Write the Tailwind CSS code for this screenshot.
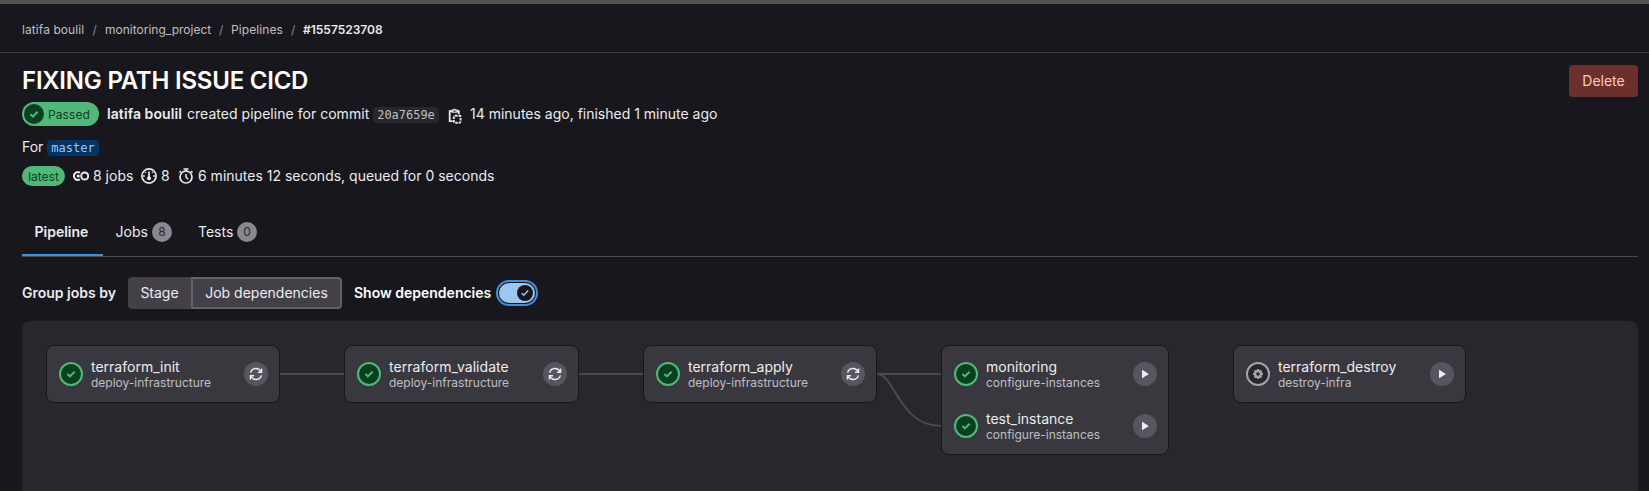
<!DOCTYPE html>
<html lang="en">
<head>
<meta charset="utf-8">
<title>Pipeline #1557523708</title>
<script src="https://cdn.jsdelivr.net/npm/@tailwindcss/browser@4"></script>
</head>
<body class="bg-[#18171d] font-['Inter',sans-serif] text-sm leading-5 text-[#ececef]">
<svg class="hidden">
  <symbol id="ok" viewBox="0 0 24 24"><circle cx="12" cy="12" r="11" fill="#0a4020" stroke="#52b87a" stroke-width="2"/><path d="M8.400 12l2.500 2.400 4.700-4.700" fill="none" stroke="#52b87a" stroke-width="2"/></symbol>
  <symbol id="retry" viewBox="0 0 24 24"><circle cx="12" cy="12" r="12" fill="#57555d"/><g fill="none" stroke="#ececef" stroke-width="1.400"><path d="M6.600 10.600A5.600 5.600 0 0 1 17.100 9.700"/><path d="M17.400 13.400A5.600 5.600 0 0 1 6.900 14.300"/><path d="M17.600 6.600v3.600h-3.600M6.400 17.400v-3.600h3.600"/></g></symbol>
  <symbol id="play" viewBox="0 0 24 24"><path d="M9 8.300v7.400a.4.4 0 0 0 .6.300l5.800-3.700a.4.4 0 0 0 0-.6L9.600 8a.4.4 0 0 0-.6.300z" fill="#ececef"/></symbol>
  <symbol id="manual" viewBox="0 0 24 24"><circle cx="12" cy="12" r="11" fill="#28272d" stroke="#a4a3a8" stroke-width="2"/><circle cx="12" cy="12" r="3" fill="none" stroke="#a4a3a8" stroke-width="2.400"/><path d="M12 7v2M12 15v2M7 12h2M15 12h2M8.500 8.500l1.300 1.300M14.200 14.200l1.300 1.300M8.500 15.500l1.300-1.300M14.200 9.800l1.300-1.300" stroke="#a4a3a8" stroke-width="2"/></symbol>
</svg>
<div class="flex h-[491px] flex-col overflow-hidden whitespace-nowrap">
  <div class="h-1 shrink-0 bg-[#535353]"></div>
  <nav class="flex h-[49px] shrink-0 items-center border-b border-[#3a383f] pl-[22px] pt-[3px] text-xs text-[#bfbfc3]">
    <span class="w-[70.500px] tracking-[0.08px]">latifa boulil</span><span class="w-[12.500px] text-[#89888d]">/</span>
    <span class="w-[114px]">monitoring_project</span><span class="w-[12px] text-[#89888d]">/</span>
    <span class="w-[60px] tracking-[0.08px]">Pipelines</span><span class="w-[12px] text-[#89888d]">/</span>
    <span class="font-semibold text-[#ececef]">#1557523708</span>
  </nav>
  <main class="flex grow flex-col pl-[22px] pr-[11px]">
    <header class="flex h-[47px] shrink-0 items-start justify-between">
      <h1 class="pt-3 text-2xl/8 font-semibold tracking-[-0.22px] text-white">FIXING PATH ISSUE CICD</h1>
      <button class="mt-3 h-8 w-[69px] rounded bg-[#6b302b] text-[#fcc9c0]">Delete</button>
    </header>
    <div class="mt-0.5 flex h-6 shrink-0 items-center">
      <span class="flex h-6 w-[77px] items-center rounded-full bg-[#52b87a] pl-0.5 text-[#0a4020]">
        <svg class="mr-1 size-5" viewBox="0 0 20 20"><circle cx="10" cy="10" r="10" fill="#0a4020"/><path d="M6.300 10.100l2.600 2.500 4.700-4.800" fill="none" stroke="#52b87a" stroke-width="2"/></svg>
        <span class="pt-px text-xs/5 tracking-[0.08px]">Passed</span>
      </span>
      <span class="ml-2 w-20 font-semibold tracking-[0.08px]">latifa boulil</span>
      <span class="w-[186px] tracking-[0.03px]">created pipeline for commit</span>
      <code class="mt-px h-4 w-[66px] rounded bg-[#28272d] text-center font-['DejaVu_Sans_Mono',monospace] text-xs/4 tracking-[-0.02px] text-[#bfbfc3]">20a7659e</code>
      <svg class="ml-[9px] mt-1 size-4 text-[#ececef]" viewBox="0 0 16 16" fill="none" stroke="currentColor"><path d="M4.500 13.200H1.700V3.200H4M9 3.200h1.800V6.200" stroke-width="1.800"/><path d="M4.200 4.200V2.200h1.200a1.300 1.300 0 0 1 2.300 0H9v2z" stroke-width="1.300"/><rect x="5.800" y="7.800" width="6.800" height="7" rx="1.200" stroke-width="1.900" stroke-dasharray="2.600 .900"/></svg>
      <span class="ml-[6px]">14 minutes ago, finished 1 minute ago</span>
    </div>
    <div class="mt-[11px] flex h-5 shrink-0 items-center">
      <span class="w-[25px]">For</span>
      <code class="mt-px h-4 w-[52px] rounded bg-[#033464] text-center font-['DejaVu_Sans_Mono',monospace] text-xs/4 text-[#9dc7f1]">master</code>
    </div>
    <div class="mt-[9px] flex h-5 shrink-0 items-center">
      <span class="h-5 w-[43px] rounded-full bg-[#52b87a] text-center text-xs/[21px] text-[#0a4020]">latest</span>
      <svg class="ml-2 size-4" viewBox="0 0 16 16" fill="none" stroke="#ececef" stroke-width="1.900"><circle cx="11.700" cy="8" r="3.500"/><path d="M7 4.700A3.900 3.900 0 1 0 7 11.300"/><circle cx="5.200" cy="8" r="1.600" fill="#ececef" stroke="none"/></svg>
      <span class="ml-1 w-12">8 jobs</span>
      <svg class="size-4" viewBox="0 0 16 16" fill="none" stroke="#ececef" stroke-width="1.700"><circle cx="8" cy="8" r="7.100"/><path d="M8 3.500v6" stroke-width="1.700"/><circle cx="8" cy="10.200" r="2" fill="#ececef" stroke="none"/><path d="M2 8h1.800M12.200 8H14M3.900 3.900l1 1M12.100 3.900l-1 1" stroke-width="1.300"/></svg>
      <span class="ml-1 w-[17px]">8</span>
      <svg class="size-4" viewBox="0 0 16 16" fill="none" stroke="#ececef" stroke-width="1.700"><circle cx="8" cy="9" r="6"/><path d="M5.500 1h5M8 1v2M13 3l1.500 1.500M3 3L1.500 4.500M8 6v3l2.200 2.200" stroke-width="1.500"/></svg>
      <span class="ml-1">6 minutes 12 seconds, queued for 0 seconds</span>
    </div>
    <div class="mt-[21px] flex h-[50px] shrink-0 items-stretch border-b border-[#4c4b51]">
      <div class="flex w-[81px] items-center border-b-2 border-[#428fdc] pl-[12.500px] pt-0.5 font-semibold">Pipeline</div>
      <div class="flex w-[82px] items-center pl-[12.500px]"><span class="w-[36.500px] tracking-[0.05px]">Jobs</span><span class="size-5 rounded-full bg-[#89888d] text-center text-xs/5 text-[#28272d]">8</span></div>
      <div class="flex items-center pl-[13px]"><span class="w-[39px]">Tests</span><span class="size-5 rounded-full bg-[#89888d] text-center text-xs/5 text-[#28272d]">0</span></div>
    </div>
    <div class="mt-5 flex h-8 shrink-0 items-center">
      <span class="w-[106px] font-semibold">Group jobs by</span>
      <button class="h-8 w-[63px] rounded-l bg-[#434147]">Stage</button>
      <button class="h-8 w-[151px] rounded-r border-2 border-[#626167] bg-[#434147]">Job dependencies</button>
      <span class="ml-3 w-[142px] font-semibold text-white">Show dependencies</span>
      <span class="flex h-[26px] w-[42px] items-center justify-center rounded-full border-2 border-[#428fdc]">
        <span class="flex h-5 w-9 items-center justify-end rounded-full bg-[#9dc7f1] pr-0.5"><svg class="size-4" viewBox="0 0 16 16"><circle cx="8" cy="8" r="8" fill="#18171d"/><path d="M4.700 8.300l2.100 2 4.400-4.700" fill="none" stroke="#9dc7f1" stroke-width="1.500"/></svg></span>
      </span>
    </div>
    <section class="mt-3 flex grow items-start rounded-t-lg bg-[#28272d] pl-6 pt-6">
      <div class="flex h-[58px] w-[234px] items-center rounded-lg border border-[#18171d] bg-[#3a383f] pl-3 pr-[11px]">
        <svg class="size-6"><use href="#ok"/></svg>
        <div class="ml-2 grow pt-0.5"><div class="text-sm/4">terraform_init</div><div class="text-xs/4 text-[#bfbfc3]">deploy-infrastructure</div></div>
        <svg class="size-6"><use href="#retry"/></svg>
      </div>
      <div class="mt-7 h-0.5 w-16 bg-[#4c4b51]"></div>
      <div class="flex h-[58px] w-[235px] items-center rounded-lg border border-[#18171d] bg-[#3a383f] pl-3 pr-[11px]">
        <svg class="size-6"><use href="#ok"/></svg>
        <div class="ml-2 grow pt-0.5"><div class="text-sm/4 tracking-[0.05px]">terraform_validate</div><div class="text-xs/4 text-[#bfbfc3]">deploy-infrastructure</div></div>
        <svg class="size-6"><use href="#retry"/></svg>
      </div>
      <div class="mt-7 h-0.5 w-16 bg-[#4c4b51]"></div>
      <div class="flex h-[58px] w-[234px] items-center rounded-lg border border-[#18171d] bg-[#3a383f] pl-3 pr-[11px]">
        <svg class="size-6"><use href="#ok"/></svg>
        <div class="ml-2 grow pt-0.5"><div class="text-sm/4">terraform_apply</div><div class="text-xs/4 text-[#bfbfc3]">deploy-infrastructure</div></div>
        <svg class="size-6"><use href="#retry"/></svg>
      </div>
      <svg class="h-[110px] w-16" viewBox="0 0 64 110" fill="none" stroke="#4c4b51" stroke-width="2"><path d="M0 29h64"/><path d="M0 29C18 29 22 81 64 81"/></svg>
      <div class="flex h-[110px] w-[228px] flex-col justify-center gap-1 rounded-lg border border-[#18171d] bg-[#3a383f] pl-3 pr-[11px]">
        <div class="flex h-12 items-center">
          <svg class="size-6"><use href="#ok"/></svg>
          <div class="ml-2 grow pt-0.5"><div class="text-sm/4 tracking-[0.02px]">monitoring</div><div class="text-xs/4 text-[#bfbfc3]">configure-instances</div></div>
          <svg class="size-6 rounded-full bg-[#57555d]"><use href="#play"/></svg>
        </div>
        <div class="flex h-12 items-center">
          <svg class="size-6"><use href="#ok"/></svg>
          <div class="ml-2 grow pt-0.5"><div class="text-sm/4">test_instance</div><div class="text-xs/4 text-[#bfbfc3]">configure-instances</div></div>
          <svg class="size-6 rounded-full bg-[#57555d]"><use href="#play"/></svg>
        </div>
      </div>
      <div class="ml-16 flex h-[58px] w-[233px] items-center rounded-lg border border-[#18171d] bg-[#3a383f] pl-3 pr-[11px]">
        <svg class="size-6"><use href="#manual"/></svg>
        <div class="ml-2 grow pt-0.5"><div class="text-sm/4">terraform_destroy</div><div class="text-xs/4 text-[#bfbfc3]">destroy-infra</div></div>
        <svg class="size-6 rounded-full bg-[#57555d]"><use href="#play"/></svg>
      </div>
    </section>
  </main>
</div>
</body>
</html>
